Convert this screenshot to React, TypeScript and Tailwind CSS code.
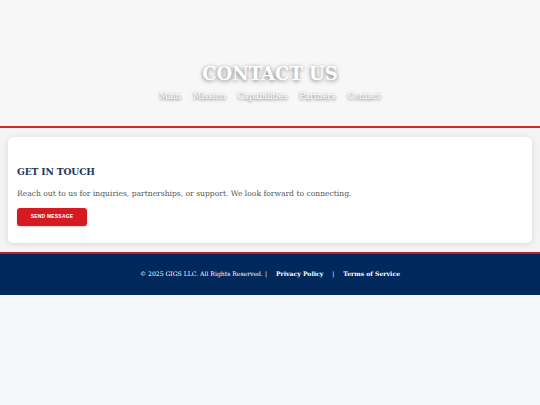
const serif = { fontFamily: '"DejaVu Serif", "Liberation Serif", serif' };

const navLinks = ['Main', 'Mission', 'Capabilities', 'Partners', 'Contact'];

export default function App() {
  return (
    <div className="min-h-screen bg-[#f6f7f8]" style={serif}>
      {/* Header */}
      <header className="h-[128px] bg-[#f7f7f7] border-b-2 border-[#d8262e] shadow-[0_1px_3px_rgba(216,38,46,0.45)] flex flex-col items-center justify-end pb-[26px]">
        <h1 className="text-[18px] font-bold leading-none text-white [text-shadow:0_1px_4px_rgba(0,0,0,0.55)]">
          CONTACT US
        </h1>
        <nav className="mt-[9px] flex gap-[12px]">
          {navLinks.map((l) => (
            <a key={l} className="text-[8.3px] leading-none text-white [text-shadow:0_1px_3px_rgba(0,0,0,0.65)]">
              {l}
            </a>
          ))}
        </nav>
      </header>

      {/* Main */}
      <main className="bg-[#f4f4f4] px-2 py-[9px]">
        <div className="bg-white rounded-[5px] shadow-[0_1px_6px_rgba(0,0,0,0.12)] px-[9px] pt-[30px] pb-[17px]">
          <h2 className="text-[9.2px] font-bold leading-none tracking-[-0.15px] text-[#1b365d]">GET IN TOUCH</h2>
          <p className="mt-[14px] text-[7.6px] leading-none text-[#555]">
            Reach out to us for inquiries, partnerships, or support. We look forward to connecting.
          </p>
          <button
            className="mt-[10px] w-[70px] h-[18px] rounded-[3px] bg-[#d71a21] text-white text-[5px] font-bold tracking-[0.2px] shadow-[0_1px_2px_rgba(0,0,0,0.2)]"
            style={{ fontFamily: '"Liberation Sans", Arial, sans-serif' }}
          >
            SEND MESSAGE
          </button>
        </div>
      </main>

      {/* Footer */}
      <footer className="h-[43px] bg-[#00285a] border-t-2 border-[#b8232f] flex items-center justify-center text-white text-[6.1px] leading-none">
        <span>© 2025 GIGS LLC. All Rights Reserved. |</span>
        <a className="ml-[9px] font-bold">Privacy Policy</a>
        <span className="mx-[9px]">|</span>
        <a className="font-bold">Terms of Service</a>
      </footer>
    </div>
  );
}
